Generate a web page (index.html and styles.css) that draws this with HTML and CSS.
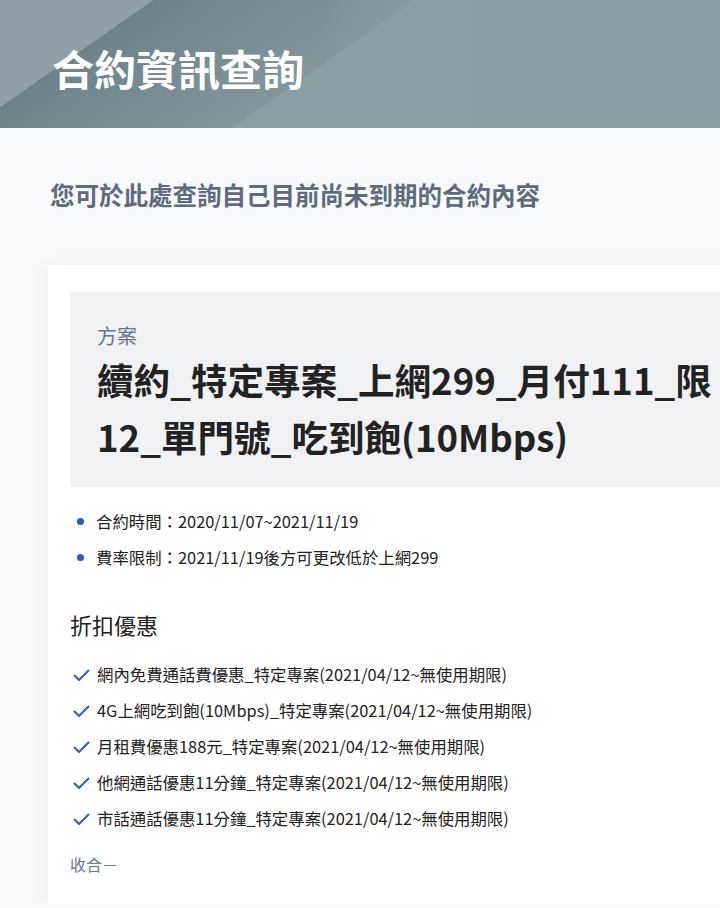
FILE: index.html
```html
<!DOCTYPE html>
<html lang="zh-Hant">
<head>
  <meta charset="UTF-8">
  <meta name="viewport" content="width=device-width, initial-scale=1.0">
  <title>合約資訊查詢</title>
  <link rel="stylesheet" href="styles.css">
</head>
<body>
  <header class="banner">
    <h1>合約資訊查詢</h1>
  </header>

  <main class="content">
    <p class="intro">您可於此處查詢自己目前尚未到期的合約內容</p>

    <section class="card">
      <div class="plan">
        <div class="plan-label">方案</div>
        <h2 class="plan-name">續約_特定專案_上網299_月付111_限12_單門號_吃到飽(10Mbps)</h2>
      </div>

      <ul class="terms">
        <li>合約時間：2020/11/07~2021/11/19</li>
        <li>費率限制：2021/11/19後方可更改低於上網299</li>
      </ul>

      <h3 class="section-title">折扣優惠</h3>
      <ul class="discounts">
        <li><svg class="check" viewBox="0 0 17 12"><path d="M1 6 L6 11 L16 1"/></svg>網內免費通話費優惠_特定專案(2021/04/12~無使用期限)</li>
        <li><svg class="check" viewBox="0 0 17 12"><path d="M1 6 L6 11 L16 1"/></svg>4G上網吃到飽(10Mbps)_特定專案(2021/04/12~無使用期限)</li>
        <li><svg class="check" viewBox="0 0 17 12"><path d="M1 6 L6 11 L16 1"/></svg>月租費優惠188元_特定專案(2021/04/12~無使用期限)</li>
        <li><svg class="check" viewBox="0 0 17 12"><path d="M1 6 L6 11 L16 1"/></svg>他網通話優惠11分鐘_特定專案(2021/04/12~無使用期限)</li>
        <li><svg class="check" viewBox="0 0 17 12"><path d="M1 6 L6 11 L16 1"/></svg>市話通話優惠11分鐘_特定專案(2021/04/12~無使用期限)</li>
      </ul>

      <a class="collapse" href="#">收合－</a>
    </section>
  </main>
</body>
</html>
```

FILE: styles.css
```css
html {
  overflow-x: hidden;
}
body {
  margin: 0;
  font-family: "Noto Sans CJK TC", "Noto Sans", sans-serif;
  background-color: #f8f9fa;
  color: #222;
}
.banner {
  height: 128px;
  box-sizing: border-box;
  padding: 37px 52px 0;
  background:
    linear-gradient(90deg, rgba(138, 157, 162, 0) 320px, #8a9da2 480px),
    linear-gradient(145deg, #8fa1a6 0, #8fa1a6 88px, #6d8389 88px, #82969b 238px, #8b9ea3 238px, #8a9da2 100%);
}
.banner h1 {
  margin: 0;
  color: #fff;
  font-size: 42px;
  line-height: 62px;
  font-weight: 700;
}
.content {
  padding: 48px 0 0 48px;
}
.intro {
  margin: 0 0 0 2px;
  color: #5d6a80;
  font-size: 24.5px;
  line-height: 37px;
  font-weight: 700;
}
.card {
  width: 740px;
  margin-top: 52px;
  padding: 27px 22px 28px;
  background: #fff;
  box-shadow: 0 0 18px rgba(0, 0, 0, 0.05);
}
.plan {
  width: 676px;
  box-sizing: border-box;
  background: #f0f1f3;
  padding: 29px 27px 22px;
}
.plan-label {
  color: #6b7587;
  font-size: 20px;
  line-height: 30px;
}
.plan-name {
  margin: 0;
  font-size: 36.6px;
  line-height: 57px;
  font-weight: 700;
}
.terms,
.discounts {
  list-style: none;
  margin: 0;
  padding: 0;
  font-size: 16.4px;
  line-height: 36px;
}
.terms {
  margin-top: 16px;
}
.terms li {
  display: flex;
  align-items: center;
}
.terms li::before {
  content: "";
  width: 7px;
  height: 7px;
  border-radius: 50%;
  background: #2c55c8;
  margin: 0 12px 0 7px;
}
.section-title {
  margin: 33px 0 16px;
  font-size: 22px;
  line-height: 32px;
  font-weight: 400;
}
.discounts li {
  display: flex;
  align-items: center;
}
.check {
  width: 17px;
  height: 12px;
  margin: 2px 7px 0 3px;
  fill: none;
  stroke: #2a5bc0;
  stroke-width: 2;
}
.collapse {
  display: block;
  margin-top: 16px;
  color: #6b7587;
  font-size: 16px;
  line-height: 24px;
  text-decoration: none;
}
```
